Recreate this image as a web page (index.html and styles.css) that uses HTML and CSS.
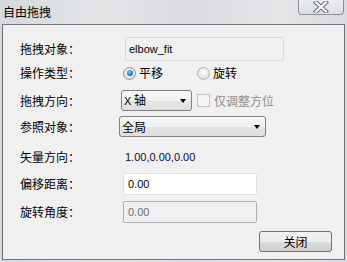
FILE: index.html
```html
<!DOCTYPE html>
<html>
<head>
<meta charset="utf-8">
<link rel="stylesheet" href="styles.css">
</head>
<body>
<div class="win">
  <div class="titlebar">
    <span class="title">自由拖拽</span>
    <div class="close">
      <svg width="18" height="12" viewBox="0 0 18 12">
        <path d="M4 1.5 L14 10.5 M14 1.5 L4 10.5" stroke="#6a6e74" stroke-width="4.2" stroke-linecap="square"/>
        <path d="M4 1.5 L14 10.5 M14 1.5 L4 10.5" stroke="#ffffff" stroke-width="2.2" stroke-linecap="square"/>
      </svg>
    </div>
  </div>
  <div class="frame">
    <div class="row r1">
      <span class="label">拖拽对象：</span>
      <div class="field ro lat">elbow_fit</div>
    </div>
    <div class="row r2">
      <span class="label">操作类型：</span>
      <div class="opt opt1"><span class="radio on"></span><span>平移</span></div>
      <div class="opt"><span class="radio"></span><span>旋转</span></div>
    </div>
    <div class="row r3">
      <span class="label">拖拽方向：</span>
      <div class="combo c1"><span><span class="x">X</span> 轴</span><span class="arrow"></span></div>
      <span class="check"></span>
      <span class="checklbl">仅调整方位</span>
    </div>
    <div class="row r4">
      <span class="label">参照对象：</span>
      <div class="combo c2"><span>全局</span><span class="arrow"></span></div>
    </div>
    <div class="row r5">
      <span class="label">矢量方向：</span>
      <span class="value lat">1.00,0.00,0.00</span>
    </div>
    <div class="row r6">
      <span class="label">偏移距离：</span>
      <div class="field edit lat">0.00</div>
    </div>
    <div class="row r7">
      <span class="label">旋转角度：</span>
      <div class="field dis lat">0.00</div>
    </div>
    <div class="row r8">
      <div class="btn">关闭</div>
    </div>
  </div>
</div>
</body>
</html>
```

FILE: styles.css
```css
* { box-sizing: border-box; }
html, body { margin: 0; padding: 0; }
body {
  width: 347px;
  height: 262px;
  overflow: hidden;
  font-family: "Liberation Sans", "Noto Sans CJK SC", sans-serif;
  font-size: 12px;
  color: #000;
}
.win {
  width: 347px;
  height: 262px;
  background: linear-gradient(to right, #d6d9dc 0%, #e2e4e6 30%, #d9dbde 55%, #e3e5e7 80%, #d8dadd 100%);
}
.titlebar {
  height: 24px;
  display: flex;
  justify-content: space-between;
  align-items: flex-start;
}
.title {
  margin: 4px 0 0 3px;
  line-height: 16px;
  font-size: 12px;
  font-family: "Noto Sans CJK SC", sans-serif;
}
.close {
  width: 46px;
  height: 15px;
  margin-right: 3px;
  border: 1px solid #8c9096;
  border-top: none;
  border-radius: 0 0 4px 4px;
  background: linear-gradient(to bottom, #ebecee, #dcdee1);
  display: flex;
  justify-content: center;
  align-items: center;
}
.frame {
  height: 236px;
  margin: 0 2px;
  border: 1px solid #6f7276;
  background: #f0f0f0;
  padding: 12px 0 0 17px;
  display: flex;
  flex-direction: column;
}
.row {
  display: flex;
  align-items: center;
  line-height: 16px;
}
.label {
  width: 99px;
  flex: none;
  font-family: "Noto Sans CJK SC", sans-serif;
}
.lat { font-family: "Liberation Sans", sans-serif; font-size: 11px; }
.r1 { height: 24px; }
.r2 { height: 22px; margin-top: 1px; }
.r3 { height: 21px; margin-top: 6px; }
.r4 { height: 21px; margin-top: 5px; }
.r5 { height: 18px; margin-top: 11px; }
.r6 { height: 22px; margin-top: 7px; }
.r7 { height: 22px; margin-top: 6px; }
.r8 { height: 21px; margin-top: 8px; justify-content: flex-end; padding-right: 12px; }

.field {
  height: 100%;
  display: flex;
  align-items: center;
  padding-left: 3px;
  border-radius: 2px;
}
.r1 .field { margin-left: 6px; width: 159px; }
.ro { background: #f0f0f0; border: 1px solid #d9d9d9; }
.edit { margin-left: 4px; width: 134px; background: #fff; border: 1px solid #e1e1e1; padding-left: 4px; }
.dis { margin-left: 4px; width: 134px; background: #f0f0f0; border: 1px solid #adadad; color: #6d6d6d; padding-left: 4px; }

.opt { display: flex; align-items: center; font-family: "Noto Sans CJK SC", sans-serif; }
.opt1 { margin-left: 4px; width: 74px; }
.radio {
  width: 13px;
  height: 13px;
  border-radius: 50%;
  border: 1px solid #8f9296;
  background: radial-gradient(circle at 50% 40%, #ffffff 0%, #e6e6e6 60%, #cfd1d3 100%);
  margin-right: 3px;
  position: relative;
  flex: none;
}
.radio.on::after {
  content: "";
  position: absolute;
  left: 2.5px;
  top: 2.5px;
  width: 6px;
  height: 6px;
  border-radius: 50%;
  background: radial-gradient(circle at 40% 35%, #8fd0ff 0%, #2a86d6 45%, #0c4c96 100%);
}
.opt:not(.opt1) .radio { border-color: #b2b4b7; }

.combo {
  height: 100%;
  border: 1px solid #7f8185;
  border-radius: 3px;
  background: linear-gradient(to bottom, #f7f7f7 0%, #f0f0f0 50%, #e6e6e6 51%, #dedede 100%);
  display: flex;
  align-items: center;
  justify-content: space-between;
  padding: 0 5px 0 2px;
  font-family: "Noto Sans CJK SC", sans-serif;
}
.c1 { width: 71px; margin-left: 2px; }
.c2 { width: 147px; margin-left: 0; }
.x { font-family: "Liberation Sans", sans-serif; font-size: 11px; }
.arrow {
  width: 0;
  height: 0;
  border-left: 3.5px solid transparent;
  border-right: 3.5px solid transparent;
  border-top: 4px solid #000;
}
.check {
  width: 13px;
  height: 13px;
  margin-left: 5px;
  border: 1px solid #c3c3c3;
  background: #f4f4f4;
  flex: none;
}
.checklbl {
  margin-left: 4px;
  color: #8d8d8d;
  font-family: "Noto Sans CJK SC", sans-serif;
}
.value { margin-left: 6px; color: #0c0c4a; }
.btn {
  width: 73px;
  height: 21px;
  border: 1px solid #707070;
  border-radius: 3px;
  background: linear-gradient(to bottom, #f2f2f2 0%, #ebebeb 50%, #dddddd 51%, #cfcfcf 100%);
  display: flex;
  align-items: center;
  justify-content: center;
  font-family: "Noto Sans CJK SC", sans-serif;
}
```
